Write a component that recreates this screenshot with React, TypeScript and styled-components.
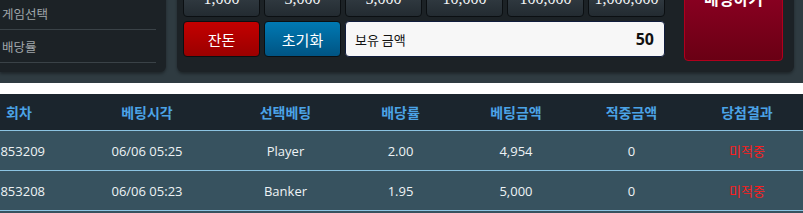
import styled, {createGlobalStyle} from 'styled-components'

const GlobalStyle = createGlobalStyle`
  body {
    margin: 0;
    background: #ffffff;
    font-family: 'Noto Sans CJK KR', 'Noto Sans', sans-serif;
    overflow: hidden;
  }
`

const chips = ['1,000', '3,000', '5,000', '10,000', '100,000', '1,000,000']

const columns = ['회차', '베팅시각', '선택베팅', '배당률', '베팅금액', '적중금액', '당첨결과']

const rows = [
  ['1853209', '06/06 05:25', 'Player', '2.00', '4,954', '0', '미적중'],
  ['1853208', '06/06 05:23', 'Banker', '1.95', '5,000', '0', '미적중'],
  ['1853207', '06/06 05:21', 'Player', '2.00', '5,000', '0', '미적중'],
]

export default function App() {
  return (
    <>
      <GlobalStyle />
      <Page>
        <Top>
          <SidePanel>
            <SideRow>게임선택</SideRow>
            <SideRow>배당률</SideRow>
          </SidePanel>
          <BetPanel>
            <Controls>
              {chips.map(c => (
                <Chip key={c}>{c}</Chip>
              ))}
              <ActionButton $tone="red">잔돈</ActionButton>
              <ActionButton $tone="blue">초기화</ActionButton>
              <Balance>
                <span>보유 금액</span>
                <BalanceValue>50</BalanceValue>
              </Balance>
            </Controls>
            <BetButton>배팅하기</BetButton>
          </BetPanel>
        </Top>
        <Spacer />
        <Table>
          <HeadRow>
            {columns.map(c => (
              <HeadCell key={c}>{c}</HeadCell>
            ))}
          </HeadRow>
          {rows.map(r => (
            <Row key={r[0]}>
              {r.map((v, i) => (
                <Cell key={i} $miss={i === 6}>
                  {v}
                </Cell>
              ))}
            </Row>
          ))}
        </Table>
      </Page>
    </>
  )
}

const Page = styled.div`
  margin-top: -25px;
  width: 803px;
`
const Top = styled.div`
  background: #2f3b41;
  display: flex;
  gap: 11px;
  padding: 0 9px 11px 0;
`
const SidePanel = styled.div`
  background: #1c2226;
  border-radius: 0 0 6px 0;
  box-shadow: 0 2px 3px rgba(0, 0, 0, 0.35);
  padding: 22px 10px 9px 0;
  width: 156px;
`
const SideRow = styled.div`
  border-bottom: 1px solid #3a4247;
  color: #a0a6aa;
  font-size: 12.5px;
  height: 32px;
  line-height: 34px;
  padding-left: 2px;
`
const BetPanel = styled.div`
  background: #1c2226;
  border-radius: 0 0 6px 6px;
  box-shadow: 0 2px 3px rgba(0, 0, 0, 0.35);
  display: flex;
  flex: 1;
  gap: 19px;
  padding: 6px 11px 10px 6px;
`
const Controls = styled.div`
  display: grid;
  gap: 4px;
  grid-template-columns: repeat(6, 77px);
  grid-template-rows: 36px 36px;
  padding-bottom: 5px;
`
const Chip = styled.div`
  align-items: center;
  background: linear-gradient(#3c464e, #232b31);
  border: 1px solid #0b0f12;
  border-radius: 4px;
  box-sizing: border-box;
  color: #f2f4f6;
  display: flex;
  font-family: 'Liberation Serif', serif;
  font-size: 16px;
  justify-content: center;
`
const ActionButton = styled.div<{$tone: 'red' | 'blue'}>`
  align-items: center;
  background: ${p =>
    p.$tone === 'red'
      ? 'linear-gradient(#c40000, #9a0000)'
      : 'linear-gradient(#0079b3, #005483)'};
  border: 1px solid #0b0f12;
  border-radius: 4px;
  box-sizing: border-box;
  color: #ffffff;
  display: flex;
  font-size: 15px;
  justify-content: center;
`
const Balance = styled.div`
  align-items: center;
  background: #f7f7f7;
  border: 1px solid #101c3c;
  border-radius: 4px;
  box-sizing: border-box;
  color: #111111;
  display: flex;
  font-size: 13px;
  grid-column: span 4;
  justify-content: space-between;
  padding: 0 10px 0 9px;
`
const BalanceValue = styled.span`
  font-family: 'Open Sans', 'Noto Sans', sans-serif;
  font-size: 16px;
  font-weight: 700;
`
const BetButton = styled.div`
  background: linear-gradient(#900024, #6a0014);
  border: 1px solid #b0001c;
  border-radius: 4px;
  box-sizing: border-box;
  color: #ffffff;
  font-size: 16px;
  font-weight: 700;
  height: 80px;
  line-height: 20px;
  padding-top: 6px;
  text-align: center;
  width: 99px;
`
const Spacer = styled.div`
  background: #ffffff;
  height: 11px;
`
const Table = styled.div`
  background: #37525f;
  margin-left: -28px;
  width: 833px;
`
const Grid = styled.div`
  display: grid;
  grid-template-columns: 94px 162px 115px 115px 116px 115px 116px;
`
const HeadRow = styled(Grid)`
  background: #1b252d;
  height: 36px;
`
const HeadCell = styled.div`
  align-items: center;
  color: #4ba3e6;
  display: flex;
  font-size: 14px;
  font-weight: 700;
  justify-content: center;
`
const Row = styled(Grid)`
  border-top: 1px solid #8cc4e2;
  height: 39px;
`
const Cell = styled.div<{$miss?: boolean}>`
  align-items: center;
  color: ${p => (p.$miss ? '#ff1c1c' : '#eef2f5')};
  display: flex;
  font-family: 'Open Sans', 'Noto Sans', 'Noto Sans CJK KR', sans-serif;
  font-size: 13px;
  justify-content: center;
`
